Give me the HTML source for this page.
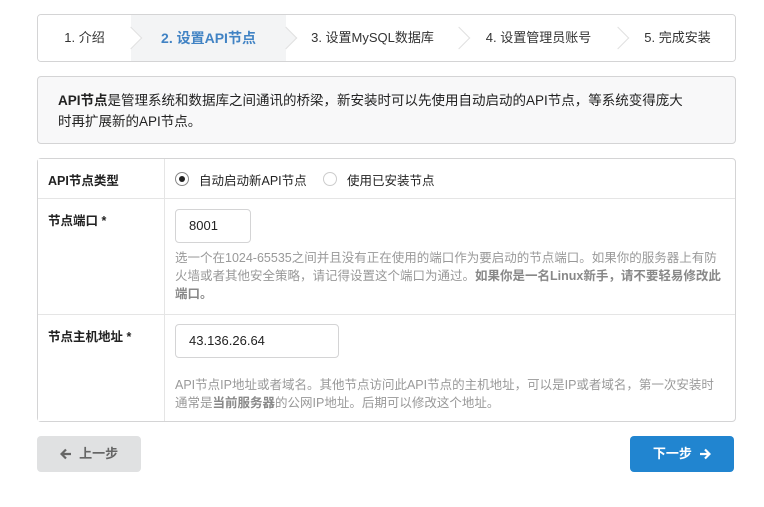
<!DOCTYPE html>
<html><head><meta charset="utf-8"><style>
*{box-sizing:border-box;margin:0;padding:0}
body{width:764px;height:507px;background:#fff;font-family:"Liberation Sans","Noto Sans CJK SC",sans-serif;font-size:13px;color:#222;position:relative;overflow:hidden}
.abs{position:absolute}
.steps{left:37px;top:14px;width:699px;height:48px;border:1px solid #d4d4d5;border-radius:4px;overflow:hidden}
.st{position:absolute;top:0;height:46px;line-height:46px;text-align:center;font-size:13px;color:#333;background:#fff}
.st .ar{position:absolute;right:-8px;top:15px;width:16px;height:16px;transform:rotate(45deg);border-top:1px solid #e0e0e0;border-right:1px solid #e0e0e0;background:inherit;z-index:2}
.info{left:37px;top:76px;width:699px;height:68px;border:1px solid #d4d4d5;border-radius:4px;background:#f8f8f9;padding:13px 48px 13px 20px;line-height:21px;font-size:13.5px;color:#222}
.tbl{left:37px;top:158px;width:699px;height:264px;border:1px solid #d4d4d5;border-radius:4px}
.lab{position:absolute;left:0;width:127px;background:#fff;border-right:1px solid #e5e5e5;font-weight:bold;font-size:12.5px;padding:11px 10px}
.row{position:absolute;left:0;width:697px;border-bottom:1px solid #e5e5e5}
.inp{position:absolute;border:1px solid #d4d4d5;border-radius:4px;height:34px;line-height:32px;padding-left:13px;font-size:13px}
.help{position:absolute;left:137px;font-size:12.5px;color:#999;line-height:18px;width:550px}
.help b{color:#888}
.btn{position:absolute;top:436px;height:36px;border-radius:4px;line-height:36px;text-align:center;font-weight:bold;font-size:13px}
.btn svg{vertical-align:-2px}
</style></head><body>
<div class="abs steps">
<div class="st" style="left:0;width:93px;z-index:5">1. 介绍<div class="ar"></div></div>
<div class="st" style="left:93px;width:155px;background:#f3f4f5;color:#4183c4;font-weight:bold;font-size:14px;z-index:4">2. 设置API节点<div class="ar"></div></div>
<div class="st" style="left:248px;width:173px;z-index:3">3. 设置MySQL数据库<div class="ar"></div></div>
<div class="st" style="left:421px;width:159px;z-index:2">4. 设置管理员账号<div class="ar"></div></div>
<div class="st" style="left:580px;width:119px;z-index:1">5. 完成安装</div>
</div>
<div class="abs info"><b>API节点</b>是管理系统和数据库之间通讯的桥梁，新安装时可以先使用自动启动的API节点，等系统变得庞大<br>时再扩展新的API节点。</div>
<div class="abs tbl">
<div class="row" style="top:0;height:40px"><div class="lab" style="top:0;height:39px">API节点类型</div>
<div class="abs" style="left:137px;top:13px;width:14px;height:14px;border:1px solid #888;border-radius:50%"><div class="abs" style="left:3px;top:3px;width:6px;height:6px;background:#222;border-radius:50%"></div></div>
<div class="abs" style="left:161px;top:11px;font-size:12.5px">自动启动新API节点</div>
<div class="abs" style="left:285px;top:13px;width:14px;height:14px;border:1px solid #ccc;border-radius:50%"></div>
<div class="abs" style="left:309px;top:11px;font-size:12.5px">使用已安装节点</div></div>
<div class="row" style="top:40px;height:116px"><div class="lab" style="top:0;height:115px">节点端口 *</div>
<div class="inp" style="left:137px;top:10px;width:76px">8001</div>
<div class="help" style="top:50px">选一个在1024-65535之间并且没有正在使用的端口作为要启动的节点端口。如果你的服务器上有防火墙或者其他安全策略，请记得设置这个端口为通过。<b>如果你是一名Linux新手，请不要轻易修改此端口。</b></div></div>
<div class="row" style="top:156px;height:106px;border-bottom:none"><div class="lab" style="top:0;height:106px">节点主机地址 *</div>
<div class="inp" style="left:137px;top:9px;width:164px">43.136.26.64</div>
<div class="help" style="top:61px">API节点IP地址或者域名。其他节点访问此API节点的主机地址，可以是IP或者域名，第一次安装时通常是<b>当前服务器</b>的公网IP地址。后期可以修改这个地址。</div></div>
</div>
<div class="btn" style="left:37px;width:104px;background:#e0e1e2;color:#666"><svg width="12" height="12" viewBox="0 0 12 12"><path d="M11 6H2M6 1.5L1.5 6 6 10.5" stroke="#666" stroke-width="2.2" fill="none"/></svg>&nbsp; 上一步</div>
<div class="btn" style="left:630px;width:104px;background:#2185d0;color:#fff">下一步 &nbsp;<svg width="12" height="12" viewBox="0 0 12 12"><path d="M1 6h9M6 1.5L10.5 6 6 10.5" stroke="#fff" stroke-width="2.2" fill="none"/></svg></div>
</body></html>
